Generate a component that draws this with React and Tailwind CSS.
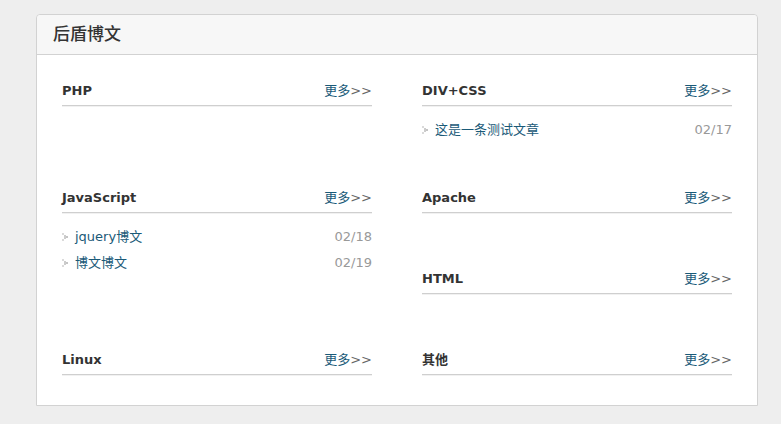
import React from "react";

const font = { fontFamily: '"DejaVu Sans", "Noto Sans CJK SC", sans-serif' };

const leftCol = [
  { title: "PHP", h: "h-[107px]", items: [] },
  {
    title: "JavaScript",
    h: "h-[162px]",
    items: [
      { text: "jquery博文", date: "02/18" },
      { text: "博文博文", date: "02/19" },
    ],
  },
  { title: "Linux", h: "h-[28px]", items: [] },
];

const rightCol = [
  {
    title: "DIV+CSS",
    h: "h-[107px]",
    items: [{ text: "这是一条测试文章", date: "02/17" }],
  },
  { title: "Apache", h: "h-[81px]", items: [] },
  { title: "HTML", h: "h-[81px]", items: [] },
  { title: "其他", h: "h-[28px]", items: [] },
];

const Bullet = () => (
  <svg width="6" height="8" viewBox="0 0 6 8" className="shrink-0">
    <rect x="0" y="0" width="2" height="2" fill="#dadada" />
    <rect x="2" y="2" width="2" height="2" fill="#cccccc" />
    <rect x="4" y="3" width="2" height="2" fill="#c4c4c4" />
    <rect x="2" y="4" width="2" height="2" fill="#cccccc" />
    <rect x="0" y="6" width="2" height="2" fill="#dadada" />
  </svg>
);

const Section = ({ title, h, items }) => (
  <div className={`${h} w-[310px]`}>
    <div className="flex h-[28px] items-center justify-between border-b border-[#cfcfcf] pb-[1px] shadow-[0_1px_0_#f1f1f1]">
      <span className="text-[13px] font-bold text-[#333]">{title}</span>
      <a href="#" className="text-[13px] text-[#1a5a78]">
        更多<span className="text-[#666]">&gt;&gt;</span>
      </a>
    </div>
    {items.length > 0 && (
      <ul className="mt-[11px]">
        {items.map((it) => (
          <li key={it.text} className="flex h-[26px] items-center justify-between">
            <div className="flex items-center gap-[7px]">
              <Bullet />
              <a href="#" className="text-[13px] text-[#1a5a78]">
                {it.text}
              </a>
            </div>
            <span className="text-[13px] text-[#999]">{it.date}</span>
          </li>
        ))}
      </ul>
    )}
  </div>
);

export default function App() {
  return (
    <div className="min-h-screen bg-[#eeeeee] pt-[14px]" style={font}>
      <div className="ml-[36px] w-[722px] rounded-t-[4px] border border-[#d2d2d2] bg-white">
        <div className="flex h-[40px] items-center rounded-t-[4px] border-b border-[#d2d2d2] bg-[#f7f7f7] px-[16px]">
          <h2 className="text-[17px] font-medium text-[#333]">后盾博文</h2>
        </div>
        <div className="flex justify-between px-[25px] pb-[30px] pt-[23px]">
          <div className="flex flex-col">
            {leftCol.map((s) => (
              <Section key={s.title} {...s} />
            ))}
          </div>
          <div className="flex flex-col">
            {rightCol.map((s) => (
              <Section key={s.title} {...s} />
            ))}
          </div>
        </div>
      </div>
    </div>
  );
}
